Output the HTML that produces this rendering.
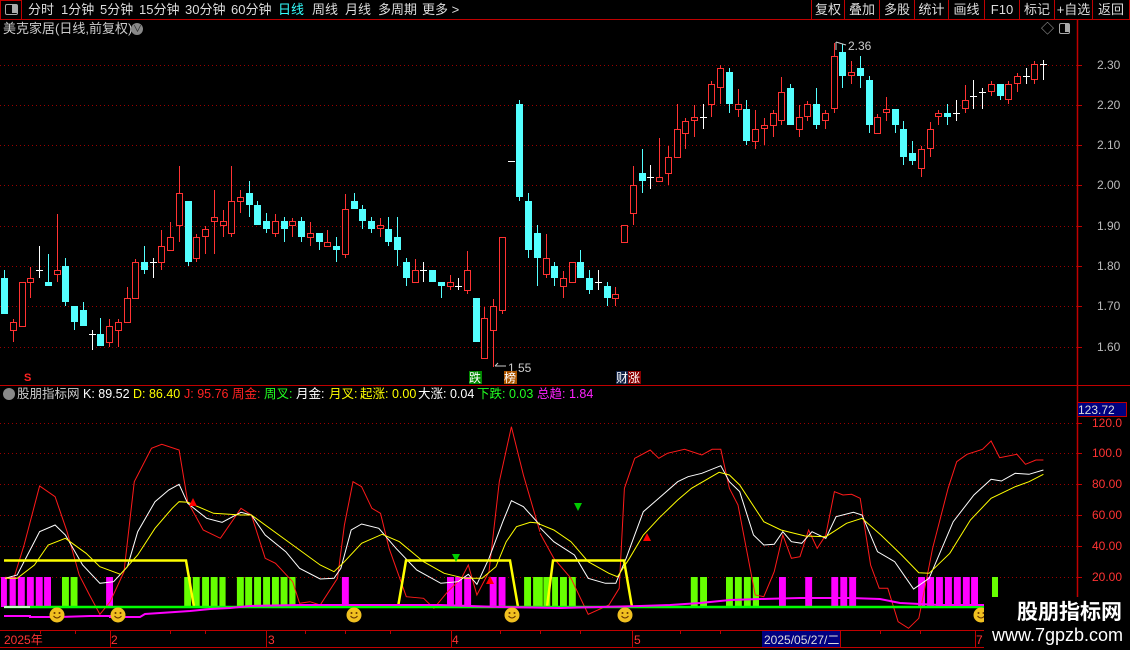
<!DOCTYPE html>
<html><head><meta charset="utf-8">
<style>
*{margin:0;padding:0;box-sizing:border-box}
body{width:1130px;height:650px;background:#000;overflow:hidden;position:relative;font-family:"Liberation Sans","Noto Sans CJK SC",sans-serif;color:#ddd}
.t{position:absolute;white-space:nowrap;font-size:13px;line-height:14px}
#top{position:absolute;left:0;top:0;width:1130px;height:20px;border-bottom:1px solid #c00000}
.btn{position:absolute;top:0;height:20px;border-left:1px solid #c00000;font-size:13px;line-height:19px;text-align:center;color:#ddd}
svg{position:absolute;left:0;top:0}
.h{font-size:12.5px}
</style></head><body>
<div id="top">
  <div style="position:absolute;left:0;top:0;width:22px;height:20px;border:1px solid #c00000"></div>
  <div style="position:absolute;left:5px;top:4px;width:13px;height:11px;border:1.5px solid #aaa;border-radius:2px"><div style="position:absolute;right:0;top:0;width:5px;height:8px;background:#aaa"></div></div>
  <span class="t" style="left:28px;top:3px">分时</span>
  <span class="t" style="left:61px;top:3px">1分钟</span>
  <span class="t" style="left:100px;top:3px">5分钟</span>
  <span class="t" style="left:139px;top:3px">15分钟</span>
  <span class="t" style="left:185px;top:3px">30分钟</span>
  <span class="t" style="left:231px;top:3px">60分钟</span>
  <span class="t" style="left:278px;top:3px;color:#3ff">日线</span>
  <span class="t" style="left:312px;top:3px">周线</span>
  <span class="t" style="left:345px;top:3px">月线</span>
  <span class="t" style="left:378px;top:3px">多周期</span>
  <span class="t" style="left:422px;top:3px">更多 &gt;</span>
  <div class="btn" style="left:811px;width:33px">复权</div>
  <div class="btn" style="left:844px;width:35px">叠加</div>
  <div class="btn" style="left:879px;width:35px">多股</div>
  <div class="btn" style="left:914px;width:34px">统计</div>
  <div class="btn" style="left:948px;width:36px">画线</div>
  <div class="btn" style="left:984px;width:35px">F10</div>
  <div class="btn" style="left:1019px;width:35px">标记</div>
  <div class="btn" style="left:1054px;width:38px">+自选</div>
  <div class="btn" style="left:1092px;width:38px;border-right:1px solid #c00000">返回</div>
</div>
<svg id="s" width="1130" height="650" xmlns="http://www.w3.org/2000/svg"></svg>
<span class="t" style="left:3px;top:22px;color:#ccc">美克家居(日线,前复权)</span>
<div style="position:absolute;left:131px;top:23px;width:12px;height:12px;border-radius:50%;background:#888"></div>
<span class="t" style="left:133px;top:22px;font-size:9px;color:#222">∨</span>
<span class="t" style="left:1041px;top:22px;color:#aaa">◇</span>
<div style="position:absolute;left:1059px;top:23px;width:11px;height:11px;border:1.5px solid #aaa;border-radius:2px"><div style="position:absolute;right:0;top:0;width:4px;height:8px;background:#aaa"></div></div>
<span class="t" style="left:1097px;top:58px;color:#bbb;font-size:12px">2.30</span>
<span class="t" style="left:1097px;top:98px;color:#bbb;font-size:12px">2.20</span>
<span class="t" style="left:1097px;top:138px;color:#bbb;font-size:12px">2.10</span>
<span class="t" style="left:1097px;top:178px;color:#bbb;font-size:12px">2.00</span>
<span class="t" style="left:1097px;top:219px;color:#bbb;font-size:12px">1.90</span>
<span class="t" style="left:1097px;top:259px;color:#bbb;font-size:12px">1.80</span>
<span class="t" style="left:1097px;top:299px;color:#bbb;font-size:12px">1.70</span>
<span class="t" style="left:1097px;top:340px;color:#bbb;font-size:12px">1.60</span>
<span class="t" style="left:848px;top:39px;color:#ccc;font-size:12px">2.36</span>
<span class="t" style="left:508px;top:361px;color:#ccc;font-size:12px">1.55</span>
<span class="t" style="left:24px;top:371px;color:#f22;font-size:11px;font-weight:bold">S</span>
<span class="t" style="left:469px;top:371px;width:13px;height:13px;background:#080;color:#fff;font-size:12px">跌</span>
<span class="t" style="left:504px;top:371px;width:13px;height:13px;background:#a50;color:#fff;font-size:12px">榜</span>
<span class="t" style="left:616px;top:371px;width:13px;height:13px;background:#124;color:#fff;font-size:12px">财</span>
<span class="t" style="left:628px;top:371px;width:13px;height:13px;background:#800;color:#fff;font-size:12px">涨</span>
<div style="position:absolute;left:3px;top:388px;width:12px;height:12px;border-radius:50%;background:#888"></div>
<span class="t h" style="left:17px;top:387px;color:#ccc">股朋指标网</span>
<span class="t h" style="left:83px;top:387px;color:#fff">K: 89.52</span>
<span class="t h" style="left:133px;top:387px;color:#ff0">D: 86.40</span>
<span class="t h" style="left:184px;top:387px;color:#f22">J: 95.76</span>
<span class="t h" style="left:232px;top:387px;color:#f22">周金:</span>
<span class="t h" style="left:264px;top:387px;color:#2f2">周叉:</span>
<span class="t h" style="left:296px;top:387px;color:#fff">月金:</span>
<span class="t h" style="left:329px;top:387px;color:#ff0">月叉:</span>
<span class="t h" style="left:360px;top:387px;color:#ff0">起涨: 0.00</span>
<span class="t h" style="left:418px;top:387px;color:#fff">大涨: 0.04</span>
<span class="t h" style="left:477px;top:387px;color:#2f2">下跌: 0.03</span>
<span class="t h" style="left:537px;top:387px;color:#f2f">总趋: 1.84</span>
<div style="position:absolute;left:1077px;top:402px;width:50px;height:15px;background:#000080;border:1px solid #c00000"></div>
<span class="t" style="left:1078px;top:403px;color:#ddd;font-size:12px">123.72</span>
<span class="t" style="left:1092px;top:416px;color:#f33;font-size:12px">120.0</span>
<span class="t" style="left:1092px;top:446px;color:#f33;font-size:12px">100.0</span>
<span class="t" style="left:1092px;top:477px;color:#f33;font-size:12px">80.00</span>
<span class="t" style="left:1092px;top:508px;color:#f33;font-size:12px">60.00</span>
<span class="t" style="left:1092px;top:539px;color:#f33;font-size:12px">40.00</span>
<span class="t" style="left:1092px;top:570px;color:#f33;font-size:12px">20.00</span>
<span class="t" style="left:4px;top:633px;color:#f33;font-size:12px">2025年</span>
<span class="t" style="left:111px;top:633px;color:#f33;font-size:12px">2</span>
<span class="t" style="left:268px;top:633px;color:#f33;font-size:12px">3</span>
<span class="t" style="left:452px;top:633px;color:#f33;font-size:12px">4</span>
<span class="t" style="left:634px;top:633px;color:#f33;font-size:12px">5</span>
<span class="t" style="left:976px;top:633px;color:#f33;font-size:12px">7</span>
<div style="position:absolute;left:762px;top:631px;width:78px;height:16px;background:#000080"></div>
<span class="t" style="left:764px;top:633px;color:#ddd;font-size:12px">2025/05/27/二</span>
<div style="position:absolute;left:984px;top:597px;width:146px;height:53px;background:#000"></div>
<span class="t" style="left:1017px;top:601px;color:#fff;font-size:21px;line-height:24px;font-weight:bold">股朋指标网</span>
<span class="t" style="left:992px;top:624px;color:#fff;font-size:18px;line-height:22px">www.7gpzb.com</span>
<script>
var s=document.getElementById('s'),h='';
function ln(x1,y1,x2,y2,c,w,d){h+='<line x1="'+x1+'" y1="'+y1+'" x2="'+x2+'" y2="'+y2+'" stroke="'+c+'" stroke-width="'+(w||1)+'"'+(d?' stroke-dasharray="'+d+'"':'')+'/>';}
function rc(x,y,w,hh,f,st){h+='<rect x="'+x+'" y="'+y+'" width="'+w+'" height="'+hh+'" fill="'+f+'"'+(st?' stroke="'+st+'"':'')+'/>';}
[65,105,145,185,226,266,306,347].forEach(function(y){ln(0,y+.5,1077,y+.5,'#900',1,'1 3');});
[423,453,484,515,546,577].forEach(function(y){ln(0,y+.5,1077,y+.5,'#900',1,'1 3');});
ln(1077.5,20,1077.5,650,'#c00000',1.5);ln(0,385.5,1130,385.5,'#c00000');
ln(0,630.5,984,630.5,'#c00000');ln(0,647.5,984,647.5,'#c00000');
[110,266,451,632,762,840,975].forEach(function(x){ln(x+.5,631,x+.5,647,'#c00000');});
[40,75,170,205,305,345,390,500,540,580,680,720,800,880,920].forEach(function(x){ln(x+.5,631,x+.5,634,'#c00000');});
[65,105,145,185,226,266,306,347].forEach(function(y){ln(1077,y+.5,1082,y+.5,'#c00000');});
[423,453,484,515,546,577].forEach(function(y){ln(1077,y+.5,1082,y+.5,'#c00000');});
var C=[[0,'c',278,314,270,314],[1,'r',322,331,319,342],[2,'r',282,327,282,327],[3,'r',278,283,267,298],[4,'w',270,270,246,278],[5,'c',282,286,254,286],[6,'r',270,275,214,282],[7,'c',266,302,258,306],[8,'c',306,322,306,330],[9,'c',310,326,302,326],[10,'w',334,334,330,350],[11,'c',334,346,318,346],[12,'r',326,343,319,347],[13,'r',322,331,319,347],[14,'r',298,323,287,323],[15,'r',262,299,259,299],[16,'c',262,270,246,274],[17,'w',262,262,258,278],[18,'r',246,263,230,270],[19,'r',237,251,222,251],[20,'r',193,226,166,242],[21,'c',201,262,201,266],[22,'r',237,259,234,262],[23,'r',229,237,226,254],[24,'r',217,222,190,254],[25,'r',221,226,210,237],[26,'r',201,234,166,237],[27,'r',197,202,190,213],[28,'c',193,205,181,217],[29,'c',205,225,201,225],[30,'c',221,229,213,233],[31,'r',221,234,214,237],[32,'c',221,229,217,242],[33,'r',221,226,218,237],[34,'c',221,237,217,242],[35,'r',233,238,222,246],[36,'c',233,242,233,250],[37,'r',242,247,230,247],[38,'c',246,250,237,262],[39,'r',209,255,194,258],[40,'c',201,209,193,209],
[41,'c',209,221,205,229],[42,'c',221,229,217,233],[43,'r',225,229,218,237],[44,'c',229,242,217,246],[45,'c',237,250,217,266],[46,'c',262,278,258,286],[47,'r',270,283,259,283],[48,'w',270,270,262,282],[49,'c',270,282,270,282],[50,'c',282,286,282,298],[51,'r',282,287,275,290],[52,'w',286,286,278,290],[53,'r',270,291,251,294],[54,'c',298,342,298,342],[55,'r',318,359,307,359],[56,'r',306,331,299,367],[57,'r',237,311,237,314],[58,'w',161,161,161,161],[59,'c',104,197,100,201],[60,'c',201,250,193,258],[61,'c',233,258,225,286],[62,'r',258,275,234,278],[63,'c',266,278,262,286],[64,'r',278,287,271,298],[65,'r',262,283,262,283],[66,'c',262,278,250,278],[67,'c',278,290,270,294],[68,'w',282,282,270,290],[69,'c',286,298,282,306],[70,'r',294,299,287,306],[71,'r',225,243,225,243],[72,'r',185,214,166,225],[73,'c',173,181,149,193],[74,'w',177,177,165,189],[75,'r',177,182,138,182],[76,'r',157,174,146,185],[77,'r',129,158,104,158],
[78,'r',121,134,118,149],[79,'r',117,121,105,137],[80,'w',117,117,104,129],[81,'r',84,105,81,117],[82,'r',68,88,65,104],[83,'c',72,104,68,113],[84,'r',104,110,89,117],[85,'c',109,141,100,145],[86,'r',129,142,110,149],[87,'r',125,129,118,145],[88,'r',113,126,110,137],[89,'r',92,121,77,125],[90,'c',88,125,84,125],[91,'r',117,130,105,137],[92,'r',104,117,101,121],[93,'c',104,125,88,129],[94,'r',113,121,110,129],[95,'r',56,109,43,113],[96,'c',52,76,44,88],[97,'r',72,76,61,84],[98,'c',68,76,56,88],[99,'c',80,125,76,133],[100,'r',117,134,114,134],[101,'r',109,113,97,121],[102,'c',109,125,109,133],[103,'c',129,157,121,165],[104,'c',153,161,141,165],[105,'r',149,169,146,177],[106,'r',129,149,122,157],[107,'r',113,117,110,125],[108,'c',113,117,104,125],[109,'w',113,113,100,121],[110,'r',100,109,85,113],[111,'w',96,96,80,109],[112,'w',92,92,88,109],[113,'r',84,92,81,96],[114,'c',84,96,84,100],[115,'r',84,100,81,104],[116,'r',76,84,73,92],[117,'w',76,76,68,84],[118,'r',64,80,61,84],[119,'w',64,64,60,80]];
C.forEach(function(c){var x=Math.round(4.3+8.73*c[0]);var col=c[1]=='c'?'#54ffff':c[1]=='r'?'#ff3232':'#fff';
 ln(x+.5,c[4],x+.5,c[5],col);
 if(c[1]=='w'){ln(x-3,c[2]+.5,x+4,c[2]+.5,col);}
 else if(c[1]=='c'){rc(x-3,c[2],7,Math.max(c[3]-c[2],1),col);}
 else{rc(x-2.5,c[2]+.5,6,Math.max(c[3]-c[2]-1,1),'#000',col);}
});
ln(836,42,836,50,'#ccc');ln(836,42,846,45,'#ccc');ln(495,366,506,366,'#ccc');ln(495,366,498,363,'#ccc');
function P(a,off){var o=[];for(var i=0;i<a.length;i+=2){o.push((off+a[i]/2.904).toFixed(1)+','+(415+a[i+1]/3).toFixed(1));}return o.join(' ');}
function pl(pts,c,w){h+='<polyline points="'+pts+'" fill="none" stroke="'+c+'" stroke-width="'+w+'"/>';}
var R1=[15,487,40,490,70,390,115,213,160,245,195,350,230,480,260,540,290,598,320,560,360,470,390,200,440,100,470,88,520,105,545,260,590,345,640,370,700,280,730,300,770,430,800,445,850,500,870,565,900,560,930,570,980,490,1000,330,1025,200,1050,215,1080,280,1105,295,1130,400,1180,545,1230,550,1260,580,1300,530,1340,490,1360,450,1385,540,1420,470,1450,200,1485,35,1520,180,1568,350];
var R2=[0,355,40,430,90,490,140,598,200,570,230,520,245,220,275,130,320,105,345,130,370,115,420,103,470,120,500,103,525,103,550,220,575,270,625,540,650,545,680,470,705,360,730,430,755,425,780,345,805,400,830,360,855,230,880,240,905,238,930,250,960,450,985,520,1010,520,1040,620,1070,640,1100,610,1140,400,1185,220,1210,140,1240,118,1285,103,1310,78,1335,128,1385,118,1410,148,1440,135,1462,135];
var W1=[15,490,50,480,80,420,115,350,160,330,190,360,240,450,290,505,330,500,370,455,400,350,450,260,490,225,520,208,545,265,600,310,645,322,700,292,730,300,770,360,830,410,870,460,930,492,970,490,990,460,1020,345,1050,327,1100,340,1150,400,1210,465,1280,505,1330,500,1360,478,1385,508,1420,430,1460,320,1485,257,1520,275,1568,330];
var W2=[0,338,40,380,100,420,140,490,190,505,220,505,250,430,300,290,345,250,400,200,430,185,470,175,525,152,550,200,580,230,620,360,650,390,680,388,705,350,730,380,760,385,790,350,830,370,860,305,910,292,935,300,980,410,1030,440,1085,522,1130,490,1200,320,1260,240,1310,193,1340,198,1380,175,1420,178,1462,165];
var Y1=[15,490,50,490,100,450,140,390,190,370,250,415,290,455,350,478,400,420,450,340,500,280,520,260,545,262,620,295,700,300,730,300,830,375,930,450,970,470,1000,440,1050,385,1110,358,1160,380,1230,440,1290,475,1350,490,1400,490,1440,455,1470,380,1500,335,1540,322,1568,325];
var Y2=[0,328,40,345,90,380,140,440,200,475,225,485,260,430,300,360,345,310,400,255,440,220,520,172,550,180,580,210,650,320,700,345,770,363,830,365,890,325,935,310,990,360,1050,420,1100,473,1130,475,1190,415,1250,315,1310,250,1380,215,1420,200,1462,178];
var bars=[[3,20,'m',0],[28,46,'m',0],[52,72,'m',0],[78,98,'m',0],[104,124,'m',0],[128,148,'m',0],[180,200,'g',0],[205,225,'g',0],[308,328,'m',0],[535,555,'g',0],[560,580,'g',0],[587,607,'g',0],[612,632,'g',0],[637,655,'g',0],[688,708,'g',0],[712,732,'g',0],[738,758,'g',0],[764,784,'g',0],[790,810,'g',0],[815,835,'g',0],[840,858,'g',0],[993,1013,'m',0],[1298,1318,'m',0],[1322,1342,'m',0],[1348,1368,'m',0],[1422,1442,'m',0],[1448,1468,'m',0],[1522,1542,'g',0],[1548,1568,'g',0],
[0,8,'g',540],[10,30,'g',540],[35,52,'g',540],[58,78,'g',540],[84,104,'g',540],[438,458,'g',540],[465,485,'g',540],[540,560,'g',540],[566,586,'g',540],[592,612,'g',540],[618,636,'g',540],[694,714,'m',540],[770,790,'m',540],[846,866,'m',540],[872,892,'m',540],[898,918,'m',540],[1098,1118,'m',540],[1124,1144,'m',540],[1150,1170,'m',540],[1176,1196,'m',540],[1202,1222,'m',540],[1228,1248,'m',540],[1252,1272,'m',540]];
bars.forEach(function(b){var x1=b[3]+b[0]/2.904,x2=b[3]+b[1]/2.904;rc(x1.toFixed(1),577,(x2-x1).toFixed(1),30,b[2]=='m'?'#ff00ff':'#66ff00');});
rc(992,577,6,22,'#66ff00');
pl(P(R1,0),'#ff1a1a',1);pl(P(R2,540),'#ff1a1a',1);
pl(P(W1,0),'#fff',1);pl(P(W2,540),'#fff',1);
pl(P(Y1,0),'#ff0',1);pl(P(Y2,540),'#ff0',1);
pl('4,560.5 186,560.5 194,607 ',"#ff0",2.5);
pl('398,607 406,560.5 510,560.5 518,607','#ff0',2.5);
pl('547,607 553,560.5 624,560.5 632,607','#ff0',2.5);
ln(4,607,985,607,'#00ff00',2.5);ln(4,607,30,607,'#fff',1.5);
pl('4,616 30,616 30,617 60,617 90,616 110,616 110,617 140,617 145,614 160,613 190,611 210,609 230,608 250,606 300,605 350,605 400,605 440,605 500,607 560,608 600,607 640,606 670,605 700,603 730,600 760,599 800,598 850,598 880,599 900,603 940,605 985,605','#ff00ff',2);
function tri(x,y,c,up){h+='<polygon points="'+(up?(x-4)+','+(y+4)+' '+(x+4)+','+(y+4)+' '+x+','+(y-4):(x-4)+','+(y-4)+' '+(x+4)+','+(y-4)+' '+x+','+(y+4))+'" fill="'+c+'"/>';}
tri(193,502,'#f00',1);tri(647,537,'#f00',1);tri(490,580,'#f00',1);tri(578,507,'#0c0',0);tri(456,558,'#0c0',0);
[57,118,354,512,625,981].forEach(function(x){h+='<circle cx="'+x+'" cy="615" r="7.5" fill="#f0c020"/><circle cx="'+(x-2.5)+'" cy="613" r="1" fill="#630"/><circle cx="'+(x+2.5)+'" cy="613" r="1" fill="#630"/><path d="M'+(x-3.5)+' 616 Q'+x+' 620 '+(x+3.5)+' 616" stroke="#630" fill="none"/>';});
s.innerHTML=h;
</script>
</body></html>
